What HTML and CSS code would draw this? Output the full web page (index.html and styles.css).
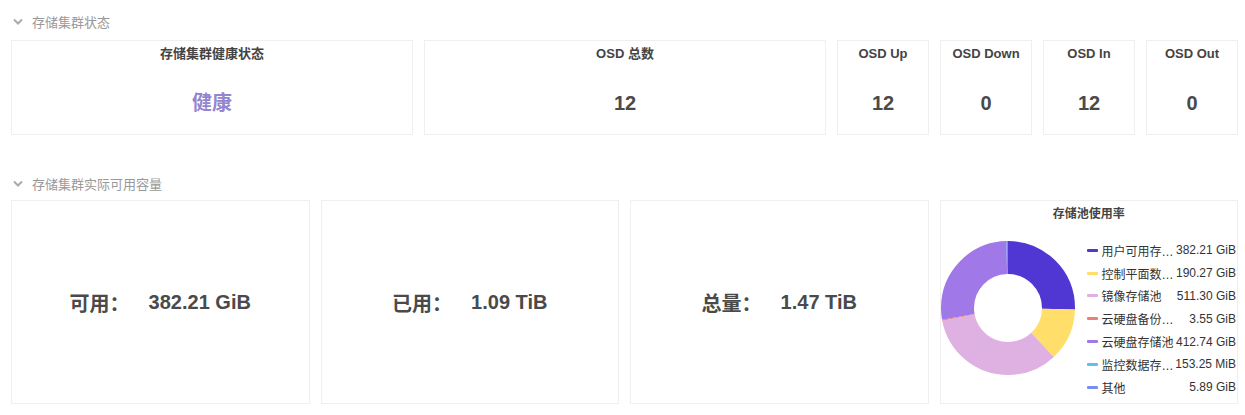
FILE: index.html
```html
<!DOCTYPE html>
<html lang="zh-CN">
<head>
    <meta charset="UTF-8">
    <meta name="viewport" content="width=device-width, initial-scale=1.0">
    <title>存储集群</title>
    <link rel="stylesheet" href="styles.css">
</head>
<body>
    <div class="section-title">
        <svg class="chevron" width="10" height="7" viewBox="0 0 10 7"><path d="M1 1.5 L5 5.5 L9 1.5" fill="none" stroke="#aaa" stroke-width="2"/></svg>
        <span>存储集群状态</span>
    </div>
    <section class="status-row">
        <div class="card wide">
            <div class="card-title">存储集群健康状态</div>
            <div class="card-value healthy">健康</div>
        </div>
        <div class="card wide">
            <div class="card-title">OSD 总数</div>
            <div class="card-value">12</div>
        </div>
        <div class="card small">
            <div class="card-title">OSD Up</div>
            <div class="card-value">12</div>
        </div>
        <div class="card small">
            <div class="card-title">OSD Down</div>
            <div class="card-value">0</div>
        </div>
        <div class="card small">
            <div class="card-title">OSD In</div>
            <div class="card-value">12</div>
        </div>
        <div class="card small">
            <div class="card-title">OSD Out</div>
            <div class="card-value">0</div>
        </div>
    </section>

    <div class="section-title second">
        <svg class="chevron" width="10" height="7" viewBox="0 0 10 7"><path d="M1 1.5 L5 5.5 L9 1.5" fill="none" stroke="#aaa" stroke-width="2"/></svg>
        <span>存储集群实际可用容量</span>
    </div>
    <section class="capacity-row">
        <div class="card capacity">
            <span class="cap-label">可用：</span>
            <span class="cap-value">382.21 GiB</span>
        </div>
        <div class="card capacity">
            <span class="cap-label">已用：</span>
            <span class="cap-value">1.09 TiB</span>
        </div>
        <div class="card capacity">
            <span class="cap-label">总量：</span>
            <span class="cap-value">1.47 TiB</span>
        </div>
        <div class="card chart">
            <div class="chart-title">存储池使用率</div>
            <div class="chart-body">
                <svg class="donut" width="134" height="134" viewBox="0 0 134 134">
                    <g transform="rotate(-90 67 67)" fill="none" stroke-width="33">
                        <circle cx="67" cy="67" r="50.5" pathLength="100" stroke="#5036d2" stroke-dasharray="25.377 74.623" stroke-dashoffset="0"/>
                        <circle cx="67" cy="67" r="50.5" pathLength="100" stroke="#ffdf6a" stroke-dasharray="12.633 87.367" stroke-dashoffset="-25.377"/>
                        <circle cx="67" cy="67" r="50.5" pathLength="100" stroke="#dfb1e2" stroke-dasharray="33.948 66.052" stroke-dashoffset="-38.010"/>
                        <circle cx="67" cy="67" r="50.5" pathLength="100" stroke="#ec8070" stroke-dasharray="0.236 99.764" stroke-dashoffset="-71.958"/>
                        <circle cx="67" cy="67" r="50.5" pathLength="100" stroke="#a178e8" stroke-dasharray="27.404 72.596" stroke-dashoffset="-72.194"/>
                        <circle cx="67" cy="67" r="50.5" pathLength="100" stroke="#66bde8" stroke-dasharray="0.05 99.95" stroke-dashoffset="-99.598"/>
                        <circle cx="67" cy="67" r="50.5" pathLength="100" stroke="#7b8cf0" stroke-dasharray="0.392 99.608" stroke-dashoffset="-99.608"/>
                    </g>
                </svg>
                <ul class="legend">
                    <li><i class="mark" style="background:#5036d2"></i><span class="name">用户可用存…</span><span class="size">382.21 GiB</span></li>
                    <li><i class="mark" style="background:#ffdf6a"></i><span class="name">控制平面数…</span><span class="size">190.27 GiB</span></li>
                    <li><i class="mark" style="background:#dfb1e2"></i><span class="name">镜像存储池</span><span class="size">511.30 GiB</span></li>
                    <li><i class="mark" style="background:#ec8070"></i><span class="name">云硬盘备份…</span><span class="size">3.55 GiB</span></li>
                    <li><i class="mark" style="background:#a178e8"></i><span class="name">云硬盘存储池</span><span class="size">412.74 GiB</span></li>
                    <li><i class="mark" style="background:#66bde8"></i><span class="name">监控数据存…</span><span class="size">153.25 MiB</span></li>
                    <li><i class="mark" style="background:#7b8cf0"></i><span class="name">其他</span><span class="size">5.89 GiB</span></li>
                </ul>
            </div>
        </div>
    </section>
</body>
</html>
```

FILE: styles.css
```css
* {
    box-sizing: border-box;
}

body {
    margin: 0;
    padding: 0 7px 0 11px;
    background: #fff;
    color: #333;
    font-family: 'Liberation Sans', 'Noto Sans CJK SC', sans-serif;
}

.section-title {
    display: flex;
    align-items: center;
    height: 20px;
    margin: 11px 0 9px;
    font-size: 13px;
    color: #999;
}

.section-title.second {
    margin: 38px 0 7px;
}

.chevron {
    margin: 1px 9px 0 2px;
}

.card {
    border: 1px solid #efefef;
    background: #fff;
}

.status-row {
    display: flex;
    gap: 11px;
    height: 95px;
}

.status-row .wide {
    width: 402px;
}

.status-row .small {
    flex: 1;
}

.status-row .card {
    padding-top: 4px;
    text-align: center;
}

.card-title {
    font-size: 13px;
    font-weight: bold;
    line-height: 18px;
    color: #444;
}

.card-value {
    margin-top: 28px;
    font-size: 20px;
    font-weight: bold;
    line-height: 24px;
    color: #4a4a4a;
}

.card-value.healthy {
    color: #9585d0;
}

.capacity-row {
    display: flex;
    gap: 11px;
    height: 204px;
}

.capacity-row .card {
    flex: 1;
}

.capacity {
    display: flex;
    align-items: center;
    justify-content: center;
    gap: 19px;
    font-size: 20px;
    font-weight: bold;
    color: #4a4a4a;
}

.chart {
    padding-top: 5px;
}

.chart-title {
    text-align: center;
    font-size: 12px;
    font-weight: bold;
    line-height: 16px;
    color: #444;
}

.chart-body {
    display: flex;
    align-items: flex-start;
    margin-top: 19px;
}

.donut {
    flex: none;
}

.legend {
    flex: 1;
    list-style: none;
    margin: -2px 0 0 12px;
    padding: 0 1px 0 0;
    font-size: 12px;
    color: #333;
}

.legend li {
    display: flex;
    align-items: center;
    height: 22.8px;
}

.mark {
    flex: none;
    width: 11px;
    height: 3px;
    margin-right: 4px;
    border-radius: 1px;
}

.name {
    flex: none;
    width: 73px;
    white-space: nowrap;
}

.size {
    flex: 1;
    text-align: right;
    white-space: nowrap;
}
```
